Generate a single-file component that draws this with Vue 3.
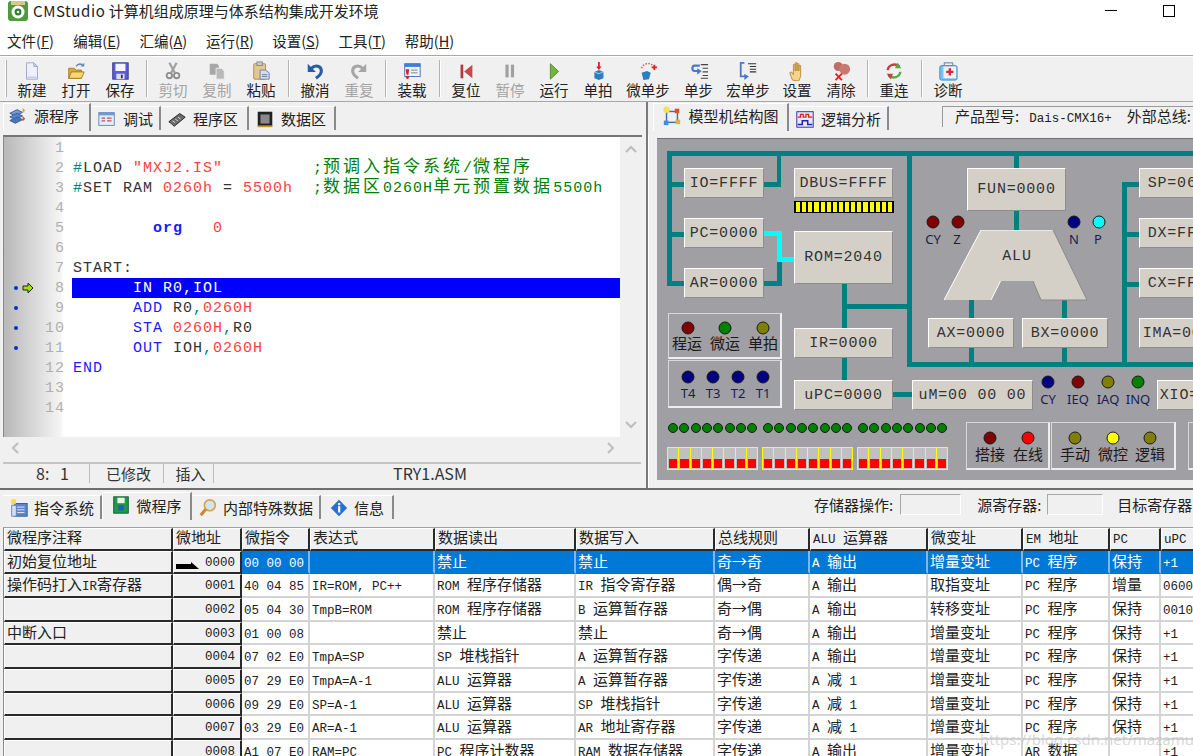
<script setup>
const icons = {
  doc: '<path d="M5 2h8l4 4v14H5z" fill="#eef1fb" stroke="#9aa6c8"/><path d="M6 17h10v2H6z" fill="#c6cfe8"/><path d="M13 2v4h4z" fill="#cfd7ee" stroke="#9aa6c8"/>',
  open: '<path d="M3 8h6l2 2h6v9H3z" fill="#d9a93a" stroke="#a37a1e"/><path d="M3 19l3-7h14l-3 7z" fill="#f6d873" stroke="#a37a1e"/><path d="M11 6c2-3 5-3 7-2" stroke="#5b82b8" fill="none" stroke-width="1.4"/><path d="M20 2l0 4-4 0z" fill="#5b82b8"/>',
  save: '<rect x="3" y="2" width="17" height="18" fill="#5c5cd6" stroke="#34348e"/><rect x="6" y="3" width="11" height="8" fill="#f4f4ff"/><rect x="7" y="14" width="9" height="6" fill="#dcdcec"/><rect x="12" y="15" width="2" height="4" fill="#334"/>',
  cut: '<path d="M7 2l6 11M15 2L9 13" stroke="#a0a0a0" stroke-width="2.4"/><circle cx="7" cy="16" r="3" fill="none" stroke="#8e8e8e" stroke-width="2"/><circle cx="15" cy="16" r="3" fill="none" stroke="#8e8e8e" stroke-width="2"/>',
  copy: '<path d="M3 3h8l2 2v10H3z" fill="#a8a8a8"/><path d="M10 8h6l3 3v9h-9z" fill="#b8b8b8" stroke="#f0f0f0"/>',
  paste: '<rect x="3" y="3" width="13" height="17" rx="1" fill="#e3c88e" stroke="#a58a55"/><rect x="6.5" y="1" width="6" height="4" fill="#c8c8c8" stroke="#888"/><path d="M10 10h6l4 3v7H10z" fill="#d4dcf0" stroke="#6b7ba5"/><path d="M12 15h6M12 17h6" stroke="#6b7ba5"/>',
  undo: '<path d="M7 8c4-4 11-3 11 3 0 4-3 6-6 8" fill="none" stroke="#2b5aa8" stroke-width="3.4"/><path d="M3 3v9h9z" fill="#2b5aa8"/>',
  redo: '<path d="M15 8c-4-4-11-3-11 3 0 4 3 6 6 8" fill="none" stroke="#a6a6a6" stroke-width="3.4"/><path d="M19 3v9h-9z" fill="#a6a6a6"/>',
  load: '<rect x="3" y="3" width="17" height="14" fill="#eef3fb" stroke="#3b6fb5"/><rect x="3" y="3" width="17" height="3.5" fill="#3b7fd8"/><path d="M10 10h7M10 13h7" stroke="#777"/><path d="M4 9h4l-1 6H5z" fill="#d62222"/><circle cx="6" cy="18" r="1.7" fill="#d62222"/>',
  reset: '<rect x="5" y="4" width="3" height="15" fill="#b23a3a"/><path d="M18 4v15l-9-7.5z" fill="#c84848"/>',
  pause: '<rect x="6" y="4" width="3.5" height="14" fill="#a0a0a0"/><rect x="12" y="4" width="3.5" height="14" fill="#a0a0a0"/>',
  run: '<path d="M7 3l9 8.5L7 20z" fill="#74b540" stroke="#4a8a22"/>',
  beat: '<path d="M7 12l5-2 5 2v7l-5 2-5-2z" fill="#2b7fc0"/><path d="M7 12l5 2 5-2" stroke="#a8d4f0" fill="none"/><path d="M12 1v7" stroke="#e02020" stroke-width="2"/><path d="M9 6h6l-3 4z" fill="#e02020"/>',
  micro: '<path d="M4 13l6-2 4 2-2 7-6 1z" fill="#2b7fc0"/><path d="M4 8C6 2 14 1 17 6" stroke="#e04040" stroke-dasharray="1.6 1.6" fill="none" stroke-width="1.4"/><path d="M15 7h6M18 4v6" stroke="#e02020" stroke-width="2"/>',
  step: '<path d="M12 5H6C3 5 3 11 6 11h5" fill="none" stroke="#4a78c8" stroke-width="2.4"/><path d="M9 8l5 3-5 4z" fill="#4a78c8"/><path d="M13 4h8M15 8h6M15 12h6M15 16h6M13 19h8" stroke="#444" stroke-width="1.2"/>',
  mstep: '<path d="M7 2H3v15h5" fill="none" stroke="#4a78c8" stroke-width="2"/><path d="M7 14l5 3-5 4z" fill="#4a78c8"/><path d="M11 3h9M13 6h7M13 9h7M13 12h7" stroke="#333" stroke-width="1.2"/>',
  hand: '<path d="M6 21l-3-8 2-1 2 3V4h2v7-9h2v9-8h2v8-6h2v12l-2 5z" fill="#f4d48c" stroke="#b88a3c"/>',
  clear: '<circle cx="8" cy="6" r="5" fill="#c46a60"/><circle cx="15" cy="9" r="6" fill="#c87a70"/><path d="M5 14l7 7M12 14l-7 7" stroke="#e02020" stroke-width="2"/>',
  conn: '<path d="M4 10C5 4 12 2 17 6" fill="none" stroke="#c04040" stroke-width="2.6"/><path d="M15 2l4 6-7 0z" fill="#5aa845"/><path d="M18 12c-1 6-8 8-13 4" fill="none" stroke="#5aa845" stroke-width="2.6"/><path d="M7 20l-4-6 7 0z" fill="#c04040"/>',
  med: '<rect x="2" y="5" width="19" height="16" rx="2" fill="#7cc0ee" stroke="#3b86c8"/><rect x="7" y="2" width="9" height="4" fill="none" stroke="#7a9ab5" stroke-width="1.4"/><rect x="6" y="6" width="14" height="13" fill="#e8f4fc"/><path d="M13 8v8M9 12h8" stroke="#e02828" stroke-width="2.6"/>',
  src: '<path d="M2 8l8-4 6 3-8 4z" fill="#6e9ad8" stroke="#345a9a"/><path d="M2 12l8-4 6 3-8 4z" fill="#5a86c8" stroke="#345a9a"/><path d="M2 16l8-4 6 3-8 4z" fill="#4a76b8" stroke="#345a9a"/><path d="M16 2l3 3-3 3z" fill="#e8a030"/><path d="M16 11l3 3-3 3z" fill="#d84a30"/>',
  dbg: '<rect x="2" y="4" width="17" height="14" fill="#e4eef9" stroke="#5f86b8"/><rect x="2" y="4" width="17" height="3" fill="#6d9ad4"/><path d="M5 10h4M11 10h5M5 13h4M11 13h5" stroke="#c05050" stroke-width="1.4"/>',
  chip: '<path d="M2 14L14 5l6 4-12 10z" fill="#6a6a6a" stroke="#222"/><path d="M3 16l3 2M6 13l3 2M9 11l3 2M12 9l3 2" stroke="#ddd"/>',
  data: '<rect x="3" y="3" width="16" height="16" fill="#222"/><rect x="6" y="6" width="10" height="10" fill="#8a8a8a"/><path d="M3 19h16" stroke="#c89030" stroke-width="2"/>',
  model: '<rect x="5" y="6" width="12" height="12" fill="none" stroke="#3a70b8" stroke-width="1.6"/><circle cx="5" cy="4" r="3.5" fill="#f4e060"/><rect x="14" y="3" width="5" height="5" fill="#d85030"/><rect x="2" y="16" width="5" height="5" fill="#4a88d8"/><rect x="15" y="15" width="5" height="5" fill="#e8b030"/>',
  wave: '<rect x="2" y="3" width="18" height="17" fill="#e8e8f8" stroke="#2020b0"/><path d="M3 9h3V6h3v3h3V6h3v3h4" fill="none" stroke="#e02020" stroke-width="1.4"/><path d="M3 17h5v-4h6v4h5" fill="none" stroke="#2020c0" stroke-width="1.6"/>',
  ins: '<rect x="6" y="6" width="14" height="14" fill="#5a88c8" stroke="#2c5a98"/><path d="M9 10h8M9 13h8M9 16h8" stroke="#eef"/><rect x="3" y="8" width="5" height="12" fill="#d4e0f2" stroke="#6080b0"/><circle cx="5" cy="4" r="3" fill="#f2dc50"/>',
  mp: '<rect x="3" y="2" width="16" height="18" fill="#1f9a4c" stroke="#0b5a2a"/><rect x="7" y="3" width="8" height="6" fill="#e8f4e8"/><rect x="8" y="11" width="6" height="6" fill="#2060b0"/>',
  find: '<circle cx="13" cy="8" r="6" fill="#cfe6f8" stroke="#e0a040" stroke-width="1.8"/><path d="M8.5 12.5L3 19" stroke="#c88a30" stroke-width="3.4"/>',
  info: '<path d="M11 2l9 9-9 9-9-9z" fill="#2a6fd0"/><rect x="10" y="9" width="2.4" height="7" fill="#fff"/><rect x="10" y="5.5" width="2.4" height="2.4" fill="#fff"/>'
}

const menus = [['文件','F'],['编辑','E'],['汇编','A'],['运行','R'],['设置','S'],['工具','T'],['帮助','H']]

const tools = [
  { l:'新建', i:'doc', w:44 }, { l:'打开', i:'open', w:44 }, { l:'保存', i:'save', w:44 }, { sep:1, w:9 },
  { l:'剪切', i:'cut', w:44, d:1 }, { l:'复制', i:'copy', w:44, d:1 }, { l:'粘贴', i:'paste', w:44 }, { sep:1, w:10 },
  { l:'撤消', i:'undo', w:44 }, { l:'重复', i:'redo', w:44, d:1 }, { sep:1, w:9 },
  { l:'装载', i:'load', w:44 }, { sep:1, w:10 },
  { l:'复位', i:'reset', w:44 }, { l:'暂停', i:'pause', w:44, d:1 }, { l:'运行', i:'run', w:44 }, { l:'单拍', i:'beat', w:44 },
  { l:'微单步', i:'micro', w:56 }, { l:'单步', i:'step', w:45 }, { l:'宏单步', i:'mstep', w:54 },
  { l:'设置', i:'hand', w:44 }, { l:'清除', i:'clear', w:44 }, { sep:1, w:9 },
  { l:'重连', i:'conn', w:44 }, { sep:1, w:10 }, { l:'诊断', i:'med', w:44 }
]

const leftTabs = [
  { l:'源程序', i:'src', w:88, a:1 }, { l:'调试', i:'dbg', w:70 }, { l:'程序区', i:'chip', w:88 }, { l:'数据区', i:'data', w:87 }
]
const rightTabs = [ { l:'模型机结构图', i:'model', w:136, a:1 }, { l:'逻辑分析', i:'wave', w:100 } ]
const bottomTabs = [
  { l:'指令系统', i:'ins', w:99 }, { l:'微程序', i:'mp', w:90, a:1 }, { l:'内部特殊数据', i:'find', w:129 }, { l:'信息', i:'info', w:73 }
]

const code = [
  [],
  [['#','tl'],['LOAD ','dk'],['"MXJ2.IS"','rd'],['         ','dk'],[';','gr'],['预调入指令系统','gc'],['/','gr'],['微程序','gc']],
  [['#','tl'],['SET RAM ','dk'],['0260h','rd'],[' = ','dk'],['5500h','rd'],['  ','dk'],[';','gr'],['数据区','gc'],['0260H','gr'],['单元预置数据','gc'],['5500h','gr']],
  [],
  [['        ','dk'],['org','kb'],['   ','dk'],['0','rd']],
  [],
  [['START:','dk']],
  [['      IN R0,IOL','wh']],
  [['      ','dk'],['ADD','bl'],[' R0','dk'],[',','tl'],['0260H','rd']],
  [['      ','dk'],['STA','bl'],[' ','dk'],['0260H','rd'],[',','tl'],['R0','dk']],
  [['      ','dk'],['OUT','bl'],[' IOH','dk'],[',','tl'],['0260H','rd']],
  [['END','bl']],
  [],
  []
]

const O = { x:657, y:138 }
const place = (x, y, w, h) => ({
  left: (x - O.x) + 'px', top: (y - O.y) + 'px',
  ...(w != null ? { width: w + 'px' } : {}),
  ...(h != null ? { height: h + 'px' } : {})
})

const buses = [
  [667,150,530,5],[667,150,5,135],[672,181,12,5],[672,231,12,5],[672,280,12,5],
  [764,181,17,5],[777,150,4,36],[764,280,18,5],[777,261,5,24],
  [907,150,5,216],[907,361,290,5],[842,283,5,44],[842,303,65,5],[842,357,5,22],[893,391,19,5],
  [1014,155,5,12],[1014,210,5,20],[969,299,5,18],[969,347,5,14],[1062,299,5,18],[1062,347,5,14],
  [1122,181,5,180],[1127,181,12,5],[1127,231,12,5],[1127,281,12,5]
]
const wires = [[764,230,18,5],[777,230,5,31],[777,256,17,5]]

const boxes = [
  ['IO=FFFF',684,167,80,30],['DBUS=FFFF',794,167,99,30],['PC=0000',684,217,80,30],['ROM=2040',794,230,99,53],
  ['AR=0000',684,267,80,30],['FUN=0000',967,167,99,43],['SP=0600',1139,167,86,30],['DX=FFFF',1139,217,86,30],
  ['CX=FFFF',1139,267,86,30],['IMA=0000',1139,317,86,30],['AX=0000',928,317,86,30],['BX=0000',1022,317,86,30],
  ['IR=0000',794,327,99,30],['uPC=0000',794,379,99,30],['uM=00 00 00',912,379,121,30],['XIO=FFFF',1157,379,84,30]
]

const leds = [
  [933,221,'dr'],[958,221,'dr'],[1074,221,'nv'],[1099,221,'cy'],
  [688,327,'dr'],[725,327,'gn'],[763,327,'ol'],
  [688,376,'nv'],[713,376,'nv'],[738,376,'nv'],[763,376,'nv'],
  [1048,381,'nv'],[1078,381,'dr'],[1108,381,'ol'],[1138,381,'gn'],
  [990,437,'dr'],[1028,437,'rd'],[1075,437,'ol'],[1113,437,'ye'],[1150,437,'ol']
]
const smallLeds = [673,768,863].flatMap(s => Array.from({ length: 8 }, (_, i) => s + i * 11.3))

const sansLabels = [
  ['CY',933,238],['Z',957,238],['N',1074,238],['P',1098,238],
  ['T4',688,392],['T3',713,392],['T2',738,392],['T1',763,392],
  ['CY',1048,398],['IEQ',1078,398],['IAQ',1108,398],['INQ',1138,398]
]
const cnLabels = [
  ['程运',687,341],['微运',725,341],['单拍',763,341],
  ['搭接',990,452],['在线',1028,452],['手动',1075,452],['微控',1113,452],['逻辑',1150,452]
]
const groups = [[668,312,114,46],[668,359,114,48],[966,421,84,48],[1051,421,125,48],[1188,421,40,48]]
const switches = [667,762,857]

const head = ['微程序注释','微地址','微指令','表达式','数据读出','数据写入','总线规则','ALU 运算器','微变址','EM 地址','PC','uPC']
const rows = [
  ['初始复位地址','0000','00 00 00','','禁止','禁止','奇→奇','A 输出','增量变址','PC 程序','保持','+1'],
  ['操作码打入IR寄存器','0001','40 04 85','IR=ROM, PC++','ROM 程序存储器','IR 指令寄存器','偶→奇','A 输出','取指变址','PC 程序','增量','0600'],
  ['','0002','05 04 30','TmpB=ROM','ROM 程序存储器','B 运算暂存器','奇→偶','A 输出','转移变址','PC 程序','保持','0010'],
  ['中断入口','0003','01 00 08','','禁止','禁止','奇→偶','A 输出','增量变址','PC 程序','保持','+1'],
  ['','0004','07 02 E0','TmpA=SP','SP 堆栈指针','A 运算暂存器','字传递','A 输出','增量变址','PC 程序','保持','+1'],
  ['','0005','07 29 E0','TmpA=A-1','ALU 运算器','A 运算暂存器','字传递','A 减 1','增量变址','PC 程序','保持','+1'],
  ['','0006','09 29 E0','SP=A-1','ALU 运算器','SP 堆栈指针','字传递','A 减 1','增量变址','PC 程序','保持','+1'],
  ['','0007','03 29 E0','AR=A-1','ALU 运算器','AR 地址寄存器','字传递','A 减 1','增量变址','PC 程序','保持','+1'],
  ['','0008','A1 07 E0','RAM=PC','PC 程序计数器','RAM 数据存储器','字传递','A 输出','增量变址','AR 数据','','+1']
]
const segs = s => s.split(/([\u4e00-\u9fff→]+)/).filter(Boolean).map(t => ({ t, cn: /[\u4e00-\u9fff→]/.test(t) }))
</script>

<template>
  <div class="app">
    <header class="title">
      <svg class="logo" viewBox="0 0 20 20" width="20" height="20">
        <rect x="0" y="0" width="20" height="20" rx="3" fill="#4f9a3c"/>
        <rect x="3" y="0" width="14" height="4" fill="#d8c890"/>
        <circle cx="10" cy="11" r="6.5" fill="#fff"/>
        <circle cx="10" cy="11" r="3.4" fill="#2f7a30"/>
        <circle cx="10" cy="11" r="1.3" fill="#fff"/>
      </svg>
      <span class="title-text"><span class="brand">CMStudio</span> 计算机组成原理与体系结构集成开发环境</span>
      <span class="win-min"></span>
      <span class="win-max"></span>
    </header>

    <nav class="menu">
      <span v-for="m in menus" :key="m[0]" class="menu-item">{{ m[0] }}(<u>{{ m[1] }}</u>)</span>
    </nav>

    <div class="toolbar">
      <span class="grip"></span>
      <template v-for="(t, i) in tools" :key="i">
        <span v-if="t.sep" class="sep" :style="{ width: t.w + 'px' }"><i></i></span>
        <div v-else class="tool" :class="{ off: t.d }" :style="{ width: t.w + 'px' }">
          <svg viewBox="0 0 22 22" width="20" height="20" v-html="icons[t.i]"></svg>
          <span>{{ t.l }}</span>
        </div>
      </template>
    </div>

    <div class="work">
      <section class="left">
        <div class="tabs">
          <div v-for="t in leftTabs" :key="t.l" class="tab" :class="{ on: t.a }" :style="{ width: t.w + 'px' }">
            <svg viewBox="0 0 22 22" width="20" height="20" v-html="icons[t.i]"></svg><span>{{ t.l }}</span>
          </div>
        </div>
        <div class="editor">
          <div class="gutter">
            <div v-for="(l, i) in code" :key="i" class="gline">
              <span v-if="i >= 7 && i <= 10" class="dot"></span>
              <svg v-if="i === 7" class="arrow" viewBox="0 0 12 12" width="12" height="12">
                <path d="M1 4h5V1l5 5-5 5V8H1z" fill="#9be000" stroke="#222" stroke-width="1"/>
              </svg>
              <span class="num">{{ i + 1 }}</span>
            </div>
          </div>
          <div class="code">
            <div v-for="(l, i) in code" :key="i" class="cline" :class="{ sel: i === 7 }">
              <span v-for="(s, j) in l" :key="j" :class="s[1]">{{ s[0] }}</span>
            </div>
          </div>
          <div class="vscroll">
            <svg viewBox="0 0 12 8" width="12" height="8"><path d="M1 7l5-5 5 5" fill="none" stroke="#bdbdbd" stroke-width="2"/></svg>
            <svg viewBox="0 0 12 8" width="12" height="8"><path d="M1 1l5 5 5-5" fill="none" stroke="#bdbdbd" stroke-width="2"/></svg>
          </div>
        </div>
        <div class="hscroll">
          <svg viewBox="0 0 8 12" width="8" height="12"><path d="M7 1L2 6l5 5" fill="none" stroke="#bdbdbd" stroke-width="2"/></svg>
          <svg viewBox="0 0 8 12" width="8" height="12"><path d="M1 1l5 5-5 5" fill="none" stroke="#bdbdbd" stroke-width="2"/></svg>
        </div>
        <div class="status">
          <span class="sf s1">8:&nbsp;&nbsp;&nbsp;1</span>
          <span class="sf s2">已修改</span>
          <span class="sf s3">插入</span>
          <span class="sf s4">TRY1.ASM</span>
        </div>
      </section>

      <section class="right">
        <div class="rtabs">
          <div v-for="t in rightTabs" :key="t.l" class="tab" :class="{ on: t.a }" :style="{ width: t.w + 'px' }">
            <svg viewBox="0 0 22 22" width="20" height="20" v-html="icons[t.i]"></svg><span>{{ t.l }}</span>
          </div>
          <div class="product">产品型号:<span class="mono">Dais-CMX16+</span><span class="bus-label">外部总线:</span></div>
        </div>
        <div class="body">
          <div class="canvas">
            <i v-for="(b, i) in buses" :key="'b' + i" class="bus" :style="place(...b)"></i>
            <i v-for="(b, i) in wires" :key="'w' + i" class="bus cyan" :style="place(...b)"></i>
            <div v-for="g in groups" :key="g[0] + '-' + g[1]" class="group" :style="place(...g)"></div>
            <div v-for="b in boxes" :key="b[0]" class="box" :style="place(b[1], b[2], b[3], b[4])">{{ b[0] }}</div>
            <div class="ledbar" :style="place(794, 200, 100, 12)"><i v-for="n in 16" :key="n"></i></div>
            <svg class="alu" :style="place(944, 229, 144, 71)" viewBox="0 0 144 71">
              <polygon points="37,0 109,0 143,70 97,70 89,51 56.5,51 47,70 0,70" fill="#d4d0c8"/>
              <path d="M0 70L37 0H109M47 70L56.5 51" fill="none" stroke="#fff" stroke-width="1"/>
              <path d="M109 0l34 70H97L89 51" fill="none" stroke="#8c8a86" stroke-width="1"/>
            </svg>
            <div class="alu-text" :style="place(1017, 255)">ALU</div>
            <i v-for="(l, i) in leds" :key="'l' + i" class="led" :class="l[2]" :style="place(l[0], l[1])"></i>
            <i v-for="(x, i) in smallLeds" :key="'s' + i" class="sled" :style="place(x, 427)"></i>
            <div v-for="l in sansLabels" :key="l[0] + l[1]" class="sans" :style="place(l[1], l[2])">{{ l[0] }}</div>
            <div v-for="l in cnLabels" :key="l[0]" class="cnl" :style="place(l[1], l[2])">{{ l[0] }}</div>
            <div v-for="x in switches" :key="x" class="switch" :style="place(x, 446, 91, 23)">
              <span v-for="n in 8" :key="n"><b></b></span>
            </div>
          </div>
        </div>
      </section>
    </div>

    <div class="bottom">
      <div class="btabs">
        <div v-for="t in bottomTabs" :key="t.l" class="tab" :class="{ on: t.a }" :style="{ width: t.w + 'px' }">
          <svg viewBox="0 0 22 22" width="20" height="20" v-html="icons[t.i]"></svg><span>{{ t.l }}</span>
        </div>
        <div class="ops">
          <span>存储器操作:</span><i class="inp i1"></i>
          <span class="o2">源寄存器:</span><i class="inp i2"></i>
          <span class="o3">目标寄存器</span>
        </div>
      </div>
      <div class="table">
        <div class="row head">
          <div v-for="h in head" :key="h" class="cell">
            <span v-for="(s, k) in segs(h)" :key="k" :class="s.cn ? 'tcn' : 'tlat'">{{ s.t }}</span>
          </div>
        </div>
        <div v-for="(r, i) in rows" :key="i" class="row" :class="{ cur: i === 0 }">
          <div v-for="(c, j) in r" :key="j" class="cell" :class="{ lab: j === 0, addr: j === 1 }">
            <svg v-if="i === 0 && j === 1" class="ptr" viewBox="0 0 24 7" width="24" height="7"><path d="M0 2h15V0l8 7H0z" fill="#000"/></svg>
            <span v-for="(s, k) in segs(c)" :key="k" :class="s.cn ? 'tcn' : 'tlat'">{{ s.t }}</span>
          </div>
        </div>
      </div>
    </div>

    <div class="mark">https://blog.csdn.net/mazamu</div>
  </div>
</template>

<style>
html, body { margin: 0; padding: 0; overflow: hidden; }
</style>

<style scoped>
.app {
  position: relative;
  width: 1193px;
  height: 756px;
  overflow: hidden;
  background: #f0f0f0;
  display: flex;
  flex-direction: column;
  font-family: "Noto Sans CJK SC", "Noto Sans", sans-serif;
  color: #1a1a1a;
}
.title {
  height: 28px;
  background: #fff;
  display: flex;
  align-items: flex-start;
  flex: none;
  position: relative;
}
.logo { margin: 1px 0 0 8px; }
.title-text { margin-left: 5px; font-size: 15px; line-height: 22px; color: #222; }
.brand { letter-spacing: 0.6px; }
.win-min { position: absolute; left: 1105px; top: 10px; width: 12px; height: 1px; background: #000; }
.win-max { position: absolute; left: 1163px; top: 5px; width: 10px; height: 10px; border: 1px solid #000; }

.menu {
  height: 27px;
  background: #fff;
  flex: none;
  display: flex;
  align-items: center;
  padding: 0 0 2px 7px;
  box-sizing: border-box;
  gap: 18.3px;
  font-size: 14.5px;
}
.menu-item { width: 48px; white-space: nowrap; color: #222; }

.toolbar {
  height: 47px;
  flex: none;
  display: flex;
  align-items: stretch;
  box-sizing: border-box;
  border-top: 1px solid #a8a8a8;
  border-bottom: 1px solid #a8a8a8;
  padding-left: 5px;
  box-shadow: inset 0 1px 0 #fff;
}
.grip { width: 5px; margin: 4px 0; background: linear-gradient(90deg, #fff 0 1px, #b0b0b0 1px 2px, transparent 2px); }
.sep { display: flex; justify-content: center; padding: 4px 0; }
.sep i { width: 1px; background: #b4b4b4; box-shadow: 1px 0 0 #fff; }
.tool {
  display: flex;
  flex-direction: column;
  align-items: center;
  padding-top: 5px;
  font-size: 14.5px;
  line-height: 18px;
  white-space: nowrap;
  color: #222;
}
.tool svg { flex: none; }
.tool.off { color: #a4a4a4; }

.work {
  height: 388px;
  flex: none;
  display: flex;
  box-sizing: border-box;
  border-bottom: 2px solid #6e6e6e;
}
.left {
  flex: none;
  border-right: 2px solid #7a7a7a;
  padding-left: 3px;
  box-sizing: content-box;
  width: 643px;
}
.tabs { height: 33px; display: flex; align-items: flex-start; padding-top: 1px; box-sizing: border-box; }
.tab {
  height: 24px;
  margin-top: 3px;
  display: flex;
  align-items: center;
  justify-content: center;
  gap: 6px;
  font-size: 15px;
  white-space: nowrap;
  border-right: 2px solid #8a8a8a;
  box-sizing: border-box;
  border-top: 1px solid #fff;
  color: #222;
  flex: none;
}
.tab.on { margin-top: 0; height: 28px; padding-bottom: 4px; border-left: 1px solid #fff; }
.tabs .tab { justify-content: flex-start; padding-left: 6px; }
.tabs .tab.on { padding-left: 4px; }

.editor {
  height: 302px;
  width: 639px;
  display: flex;
  border-top: 2px solid #767676;
  border-left: 1px solid #8a8a8a;
  box-sizing: border-box;
  overflow: hidden;
}
.gutter {
  width: 68px;
  flex: none;
  background: linear-gradient(90deg, #b8b8b8 0, #f4f4f4 56px, #fff 60px);
  padding-top: 1px;
  box-sizing: border-box;
}
.gline { height: 20px; position: relative; }
.num {
  position: absolute;
  right: 7px;
  top: 0;
  font: 15px/22px "Liberation Mono", monospace;
  letter-spacing: 1px;
  color: #b0b0b0;
}
.dot { position: absolute; left: 10px; top: 8px; width: 4px; height: 4px; border-radius: 50%; background: #0030d0; }
.arrow { position: absolute; left: 18px; top: 4px; }
.code { width: 548px; flex: none; background: #fff; padding-top: 1px; box-sizing: border-box; }
.cline {
  height: 20px;
  font: 15px/22px "Liberation Mono", monospace;
  letter-spacing: 1px;
  white-space: pre;
  padding-left: 1px;
  color: #333;
}
.cline.sel { background: #0000ff; }
.dk { color: #333; }
.tl { color: #008080; }
.rd { color: #ff4040; }
.gr { color: #008000; }
.gc { color: #008000; font-family: "Noto Sans CJK SC", sans-serif; font-size: 17px; letter-spacing: 3px; line-height: 0; }
.bl { color: #1a1aff; }
.kb { color: #1a1aff; font-weight: bold; }
.wh { color: #fff; }
.vscroll {
  flex: 1;
  display: flex;
  flex-direction: column;
  justify-content: space-between;
  align-items: center;
  padding: 8px 0 8px;
  box-sizing: border-box;
}
.hscroll {
  height: 22px;
  width: 618px;
  padding: 0 6px 0 8px;
  box-sizing: border-box;
  display: flex;
  justify-content: space-between;
  align-items: center;
}
.status {
  margin-top: 3px;
  height: 23px;
  display: flex;
  gap: 4px;
  font-size: 15px;
  line-height: 19px;
  border-top: 2px solid #c4c4c4;
  padding-left: 1px;
  width: 638px;
  box-sizing: border-box;
}
.sf { text-align: center; box-sizing: border-box; border-right: 1px solid #bdbdbd; color: #333; flex: none; height: 19px; }
.s1 { width: 86px; font-size: 16px; padding-left: 12px; }
.s2 { width: 70px; }
.s3 { width: 46px; }
.s4 { width: 424px; border-right: 0; font-size: 16px; }

.right { flex: 1; min-width: 0; }
.rtabs { height: 33px; display: flex; align-items: flex-start; padding: 1px 0 0 5px; box-sizing: border-box; white-space: nowrap; }
.product {
  margin: 3px 0 0 53px;
  height: 21px;
  padding-left: 12px;
  font-size: 15px;
  line-height: 17px;
  border-top: 1px solid #9a9a9a;
  border-left: 1px solid #9a9a9a;
  box-sizing: border-box;
  width: 400px;
  flex: none;
  color: #222;
}
.mono { font-family: "Liberation Mono", monospace; font-size: 12.5px; margin-left: 10px; }
.bus-label { margin-left: 15px; }
.body { padding: 3px 0 8px 8px; height: 353px; box-sizing: border-box; border-left: 1px solid #fff; }
.canvas {
  position: relative;
  height: 100%;
  background: #a09fa4;
  border-top: 1px solid #707070;
  box-sizing: border-box;
  overflow: hidden;
}
.bus { position: absolute; background: #008080; display: block; }
.bus.cyan { background: #00ffff; }
.group {
  position: absolute;
  box-sizing: border-box;
  border-top: 1px solid #d8d8d8;
  border-left: 1px solid #d8d8d8;
  border-right: 2px solid #eeeeee;
  border-bottom: 2px solid #eeeeee;
}
.box {
  position: absolute;
  box-sizing: border-box;
  background: #d4d0c8;
  border-top: 1px solid #fff;
  border-left: 1px solid #fff;
  border-right: 1px solid #8f8d89;
  border-bottom: 1px solid #8f8d89;
  display: flex;
  align-items: center;
  justify-content: center;
  font: 15px "Liberation Mono", monospace;
  letter-spacing: 0.8px;
  color: #333;
  white-space: pre;
}
.ledbar {
  position: absolute;
  box-sizing: border-box;
  background: #000;
  display: flex;
  gap: 2px;
  padding: 1px 2px;
}
.ledbar i { flex: 1; background: #ffff00; }
.alu { position: absolute; display: block; }
.alu-text {
  position: absolute;
  transform: translate(-50%, -50%);
  font: 15px "Liberation Mono", monospace;
  letter-spacing: 0.8px;
  color: #333;
}
.led {
  position: absolute;
  width: 13px;
  height: 13px;
  border-radius: 50%;
  border: 1px solid #1a1a1a;
  box-sizing: border-box;
  transform: translate(-50%, -50%);
}
.dr { background: #800000; }
.rd.led { background: #ff0000; }
.gn { background: #008000; }
.ol { background: #808000; }
.nv { background: #000080; }
.cy { background: #00ffff; }
.ye { background: #ffff00; }
.sled {
  position: absolute;
  width: 10px;
  height: 10px;
  border-radius: 50%;
  background: #008000;
  border: 1px solid #1a1a1a;
  box-sizing: border-box;
  transform: translate(-50%, -50%);
}
.sans {
  position: absolute;
  transform: translate(-50%, -50%);
  font: 13px "Noto Sans", sans-serif;
  color: #1c1c50;
  white-space: nowrap;
}
.cnl {
  position: absolute;
  transform: translate(-50%, -50%);
  font-size: 15px;
  white-space: nowrap;
  color: #1a1a1a;
}
.switch { position: absolute; display: flex; box-sizing: border-box; border: 1px solid #ffff00; }
.switch span {
  flex: 1;
  background: #c0c0c0;
  border-left: 1px solid #ffff00;
  display: flex;
  align-items: flex-end;
  padding: 0 1px 1px;
}
.switch span:first-child { border-left: 0; }
.switch b { display: block; width: 100%; height: 9px; background: #ff0000; }

.bottom { flex: 1; min-height: 0; }
.btabs { height: 37px; display: flex; align-items: flex-start; padding: 2px 0 0 3px; box-sizing: border-box; }
.btabs .tab { gap: 5px; margin-top: 3px; height: 24px; }
.btabs .tab.on { margin-top: 0; height: 28px; padding-bottom: 3px; }
.ops { display: flex; align-items: center; margin-left: 420px; height: 24px; font-size: 15px; white-space: nowrap; color: #222; flex: none; }
.inp { display: block; height: 21px; box-sizing: border-box; border-top: 1px solid #a8a8a8; border-left: 1px solid #a8a8a8; border-right: 1px solid #fff; border-bottom: 1px solid #fff; flex: none; }
.i1 { width: 61px; margin-left: 7px; }
.i2 { width: 56px; margin-left: 6px; }
.o2 { margin-left: 16px; }
.o3 { margin-left: 14px; }

.table { margin-left: 3px; border-left: 1px solid #8a8a8a; border-top: 1px solid #a0a0a0; width: 1250px; }
.row {
  display: grid;
  grid-template-columns: 169px 69px 68px 125px 141px 139px 95px 118px 95px 87px 51px 100px;
  height: 23.7px;
}
.row.head { height: 22.5px; }
.cell {
  background: #fff;
  border-right: 2px solid #d4d4d4;
  border-bottom: 2px solid #d4d4d4;
  box-sizing: border-box;
  padding-left: 2px;
  white-space: nowrap;
  overflow: hidden;
  line-height: 19px;
  color: #222;
}
.tcn { font-size: 15px; line-height: 0; }
.tlat { font-family: "Liberation Mono", monospace; font-size: 12.5px; line-height: 0; white-space: pre; }
.head .cell {
  background: #f0f0f0;
  border-top: 1px solid #fff;
  border-left: 1px solid #fff;
  border-right: 2px solid #2a2a2a;
  border-bottom: 2px solid #2a2a2a;
  line-height: 15px;
}
.cell.lab, .cell.addr {
  background: #f0f0f0;
  border-top: 1px solid #fff;
  border-left: 1px solid #fff;
  border-right: 2px solid #2a2a2a;
  border-bottom: 2px solid #2a2a2a;
  line-height: 17px;
}
.cell.addr { text-align: right; padding-right: 5px; position: relative; line-height: 15px; }
.ptr { position: absolute; left: 2px; top: 10px; }
.cur .cell:not(.lab):not(.addr) {
  background: #0078d7;
  color: #fff;
  border-right: 2px solid #7fb8e8;
  border-bottom-color: #0078d7;
}
.mark {
  position: absolute;
  left: 980px;
  top: 729px;
  font: 15px "Noto Sans", sans-serif;
  color: rgba(190, 190, 190, 0.6);
  white-space: nowrap;
}
</style>
